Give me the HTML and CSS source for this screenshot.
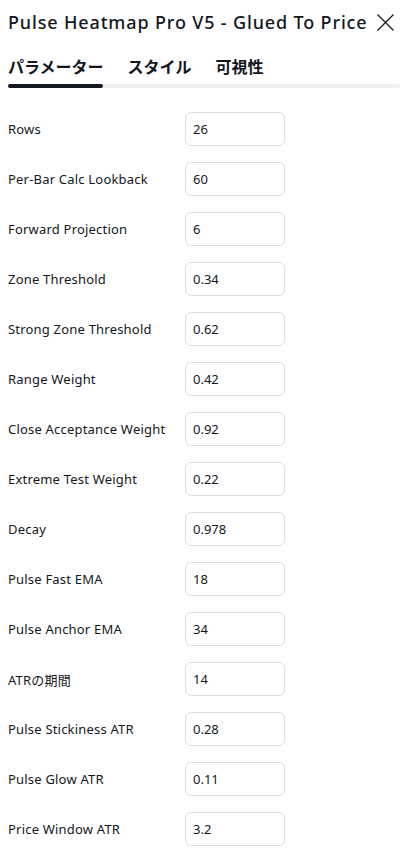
FILE: index.html
```html
<!DOCTYPE html>
<html lang="ja">
<head>
<meta charset="utf-8">
<link rel="stylesheet" href="styles.css">
</head>
<body>
<div class="dialog">
  <header class="header">
    <h1 class="title">Pulse Heatmap Pro V5 - Glued To Price</h1>
    <button class="close" aria-label="close">
      <svg width="17" height="17" viewBox="0 0 17 17"><path d="M0.5 0.5 L16.5 16.5 M16.5 0.5 L0.5 16.5" stroke="#131722" stroke-width="1.2" fill="none"/></svg>
    </button>
  </header>
  <nav class="tabs">
    <div class="tab active">パラメーター</div>
    <div class="tab">スタイル</div>
    <div class="tab">可視性</div>
  </nav>
  <div class="track"><div class="track-active"></div></div>
  <div class="rows">
    <div class="row"><span class="label">Rows</span><div class="input">26</div></div>
    <div class="row"><span class="label">Per-Bar Calc Lookback</span><div class="input">60</div></div>
    <div class="row"><span class="label">Forward Projection</span><div class="input">6</div></div>
    <div class="row"><span class="label">Zone Threshold</span><div class="input">0.34</div></div>
    <div class="row"><span class="label">Strong Zone Threshold</span><div class="input">0.62</div></div>
    <div class="row"><span class="label">Range Weight</span><div class="input">0.42</div></div>
    <div class="row"><span class="label">Close Acceptance Weight</span><div class="input">0.92</div></div>
    <div class="row"><span class="label">Extreme Test Weight</span><div class="input">0.22</div></div>
    <div class="row"><span class="label">Decay</span><div class="input">0.978</div></div>
    <div class="row"><span class="label">Pulse Fast EMA</span><div class="input">18</div></div>
    <div class="row"><span class="label">Pulse Anchor EMA</span><div class="input">34</div></div>
    <div class="row"><span class="label">ATRの期間</span><div class="input">14</div></div>
    <div class="row"><span class="label">Pulse Stickiness ATR</span><div class="input">0.28</div></div>
    <div class="row"><span class="label">Pulse Glow ATR</span><div class="input">0.11</div></div>
    <div class="row"><span class="label">Price Window ATR</span><div class="input">3.2</div></div>
  </div>
</div>
</body>
</html>
```
FILE: styles.css
```css
* { box-sizing: border-box; }
html, body { margin: 0; padding: 0; background: #fff; }
body {
  font-family: "Noto Sans", "Noto Sans CJK JP", sans-serif;
  color: #131722;
  width: 409px;
  overflow: hidden;
}
.dialog { padding: 0 9px 0 8px; }
.header {
  display: flex;
  align-items: center;
  justify-content: space-between;
  height: 44px;
}
.title {
  margin: 0;
  font-size: 18px;
  font-weight: 500;
  white-space: nowrap;
  letter-spacing: 0.85px;
}
.close {
  border: 0;
  background: none;
  padding: 0;
  margin-right: 6px;
  width: 17px;
  height: 17px;
  display: flex;
}
.tabs {
  display: flex;
  gap: 24px;
  height: 44px;
  align-items: center;
}
.tab {
  font-size: 16px;
  font-weight: 700;
}
.track {
  height: 4px;
  background: #f0f0f0;
  border-radius: 2px;
  margin-top: -4px;
}
.track-active {
  width: 95px;
  height: 4px;
  background: #131722;
  border-radius: 2px;
}
.rows {
  display: flex;
  flex-direction: column;
  gap: 16px;
  padding-top: 24px;
}
.row {
  display: flex;
  align-items: center;
  height: 34px;
}
.label {
  width: 177px;
  font-size: 13px;
  white-space: nowrap;
  letter-spacing: 0.2px;
}
.input {
  width: 100px;
  height: 34px;
  border: 1px solid #dcdde0;
  border-radius: 6px;
  font-size: 13px;
  display: flex;
  align-items: center;
  padding-left: 7px;
}
```
